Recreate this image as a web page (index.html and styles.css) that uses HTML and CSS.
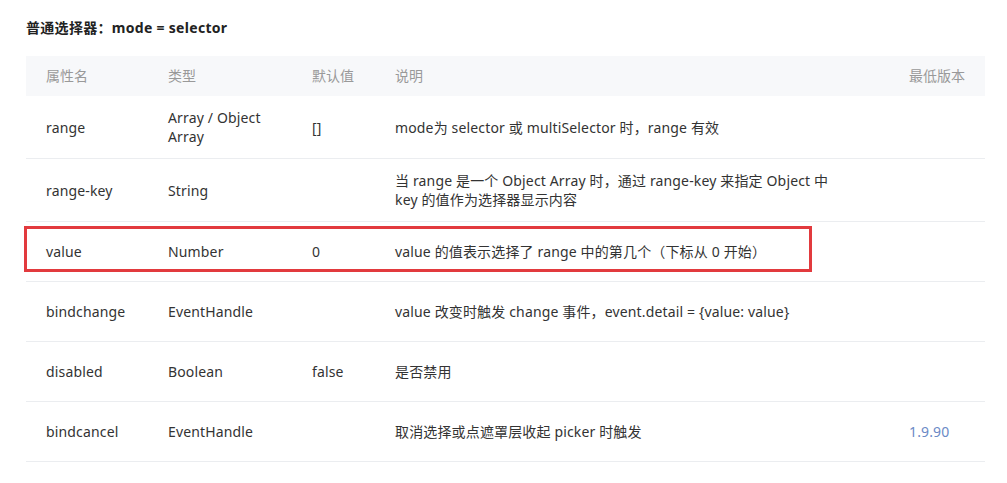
FILE: index.html
```html
<!DOCTYPE html>
<html lang="zh-CN">
<head>
<meta charset="utf-8">
<title>picker</title>
<link rel="stylesheet" href="styles.css">
</head>
<body>
<h4 class="title">普通选择器：mode = selector</h4>
<div class="table-wrap">
  <table class="props">
    <colgroup>
      <col class="c1"><col class="c2"><col class="c3"><col class="c4"><col class="c5">
    </colgroup>
    <thead>
      <tr><th>属性名</th><th>类型</th><th>默认值</th><th>说明</th><th>最低版本</th></tr>
    </thead>
    <tbody>
      <tr><td>range</td><td>Array / Object Array</td><td>[]</td><td class="desc">mode为 selector 或 multiSelector 时，range 有效</td><td></td></tr>
      <tr><td>range-key</td><td>String</td><td></td><td class="desc">当 range 是一个 Object Array 时，通过 range-key 来指定 Object 中 key 的值作为选择器显示内容</td><td></td></tr>
      <tr><td>value</td><td>Number</td><td>0</td><td class="desc">value 的值表示选择了 range 中的第几个（下标从 0 开始）</td><td></td></tr>
      <tr><td>bindchange</td><td>EventHandle</td><td></td><td class="desc">value 改变时触发 change 事件，event.detail = {value: value}</td><td></td></tr>
      <tr><td>disabled</td><td>Boolean</td><td>false</td><td class="desc">是否禁用</td><td></td></tr>
      <tr><td>bindcancel</td><td>EventHandle</td><td></td><td class="desc">取消选择或点遮罩层收起 picker 时触发</td><td class="ver">1.9.90</td></tr>
    </tbody>
  </table>
  <div class="highlight"></div>
</div>
</body>
</html>
```
FILE: styles.css
```css
html, body {
  margin: 0;
  padding: 0;
  background: #fff;
}
body {
  padding: 18px 22px 0 26px;
  font-family: "Noto Sans", "Noto Sans CJK SC", sans-serif;
  font-size: 14px;
  color: #333;
  text-spacing-trim: space-all;
}
.title {
  margin: 0 0 18px 0;
  font-size: 14px;
  line-height: 20px;
  font-weight: 700;
  color: #222;
  letter-spacing: 0.3px;
}
.table-wrap {
  position: relative;
}
.props {
  width: 100%;
  border-collapse: collapse;
  table-layout: fixed;
}
.c1 { width: 122px; }
.c2 { width: 144px; }
.c3 { width: 83px; }
.c4 { width: auto; }
.c5 { width: 96px; }
.props th {
  background: #f7f8fa;
  color: #999;
  font-weight: 400;
  text-align: left;
  height: 40px;
  padding: 0 20px;
  line-height: 20px;
}
.props td {
  height: 35px;
  padding: 12px 20px;
  line-height: 19px;
  border-bottom: 1px solid #ebedf0;
  vertical-align: middle;
  letter-spacing: 0.15px;
}
.props td.desc {
  padding-right: 45px;
}
.props td.ver {
  color: #6b8ac6;
}
.highlight {
  position: absolute;
  left: -2px;
  top: 170px;
  width: 782px;
  height: 40px;
  border: 3px solid #e23a3e;
}
```
